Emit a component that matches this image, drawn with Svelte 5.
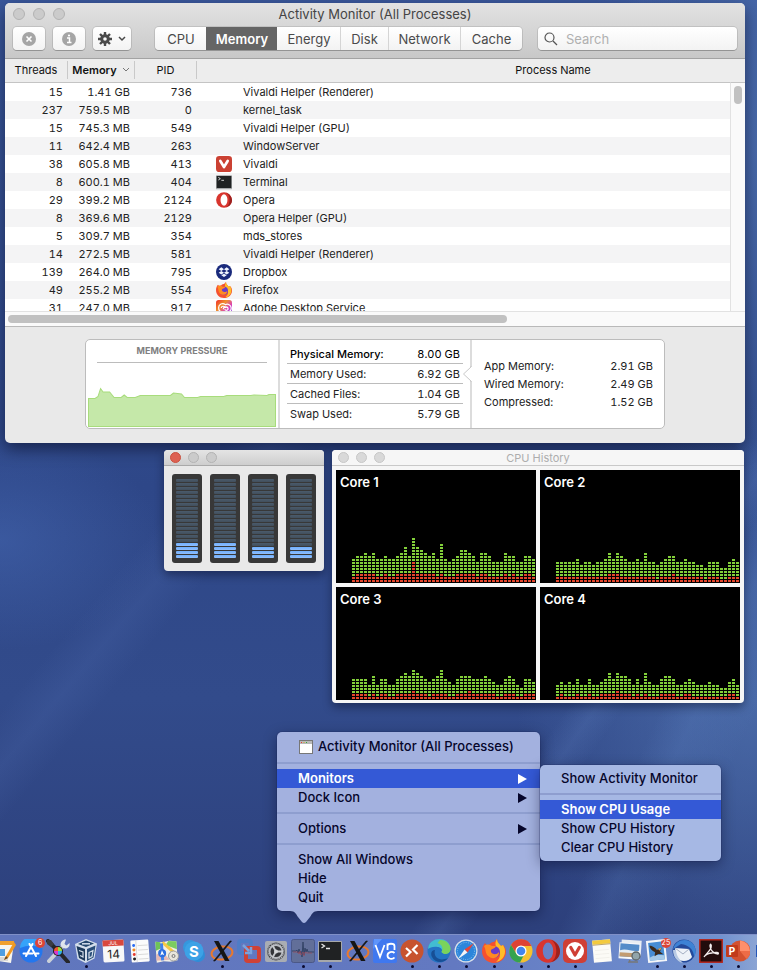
<script lang="ts">
	type Process = { threads: number; memory: string; pid: number; name: string; icon?: string };

	const processes: Process[] = [
		{ threads: 15, memory: '1.41 GB', pid: 736, name: 'Vivaldi Helper (Renderer)' },
		{ threads: 237, memory: '759.5 MB', pid: 0, name: 'kernel_task' },
		{ threads: 15, memory: '745.3 MB', pid: 549, name: 'Vivaldi Helper (GPU)' },
		{ threads: 11, memory: '642.4 MB', pid: 263, name: 'WindowServer' },
		{ threads: 38, memory: '605.8 MB', pid: 413, name: 'Vivaldi', icon: 'vivaldi' },
		{ threads: 8, memory: '600.1 MB', pid: 404, name: 'Terminal', icon: 'terminal' },
		{ threads: 29, memory: '399.2 MB', pid: 2124, name: 'Opera', icon: 'opera' },
		{ threads: 8, memory: '369.6 MB', pid: 2129, name: 'Opera Helper (GPU)' },
		{ threads: 5, memory: '309.7 MB', pid: 354, name: 'mds_stores' },
		{ threads: 14, memory: '272.5 MB', pid: 581, name: 'Vivaldi Helper (Renderer)' },
		{ threads: 139, memory: '264.0 MB', pid: 795, name: 'Dropbox', icon: 'dropbox' },
		{ threads: 49, memory: '255.2 MB', pid: 554, name: 'Firefox', icon: 'firefox' },
		{ threads: 31, memory: '247.0 MB', pid: 917, name: 'Adobe Desktop Service', icon: 'adobe' }
	];

	const tabs = ['CPU', 'Memory', 'Energy', 'Disk', 'Network', 'Cache'];
	let activeTab = $state('Memory');
	let search = $state('');

	const totals = [
		['Physical Memory:', '8.00 GB'],
		['Memory Used:', '6.92 GB'],
		['Cached Files:', '1.04 GB'],
		['Swap Used:', '5.79 GB']
	];
	const breakdown = [
		['App Memory:', '2.91 GB'],
		['Wired Memory:', '2.49 GB'],
		['Compressed:', '1.52 GB']
	];

	// lit segments per core, out of 20
	const usage = [4, 4, 3, 3];
	const segments = Array.from({ length: 20 }, (_, i) => 20 - i);

	// total = user + system, counted in cells
	const cores = [
		{
			name: 'Core 1',
			total: [8,9,9,10,9,10,8,8,9,8,8,9,10,12,9,15,12,11,10,9,10,8,13,8,7,8,9,11,11,10,9,7,10,10,9,7,7,7,10,9,9,7,7,9,9,8],
			system: [2,3,3,3,3,3,2,2,3,2,2,3,3,3,3,7,3,3,3,3,3,2,3,2,2,2,3,3,3,3,3,2,3,3,2,2,2,2,3,2,3,2,2,3,3,2]
		},
		{
			name: 'Core 2',
			total: [7,7,7,7,7,8,6,7,7,6,7,7,8,10,8,10,9,8,7,7,8,7,10,7,7,6,7,8,9,9,7,7,8,7,7,6,6,5,7,7,7,5,5,7,8,7],
			system: [2,2,2,2,2,2,2,2,2,2,2,2,2,3,3,3,2,2,2,2,2,2,2,2,2,1,2,2,2,3,2,2,2,2,2,2,2,1,2,2,2,1,1,2,2,2]
		},
		{
			name: 'Core 3',
			total: [7,7,7,7,5,8,5,7,7,5,5,7,8,9,8,10,9,8,7,6,7,8,10,7,6,5,7,8,8,8,7,7,7,8,7,6,5,5,7,8,7,5,4,7,7,6],
			system: [2,2,2,2,1,2,1,2,2,1,1,2,2,2,2,3,2,2,2,1,2,2,2,2,1,1,2,2,2,3,2,2,2,2,2,2,1,1,2,2,2,1,1,2,2,2]
		},
		{
			name: 'Core 4',
			total: [5,6,5,6,5,7,5,5,7,5,5,6,7,9,7,9,8,8,7,5,7,5,9,6,5,5,7,8,8,7,5,5,6,7,6,5,5,5,6,5,5,4,4,6,7,5],
			system: [1,2,1,1,1,2,1,1,2,1,1,2,2,2,2,3,2,2,2,1,2,1,2,1,1,1,2,2,2,2,1,1,2,2,1,1,1,1,1,1,1,1,1,2,2,1]
		}
	];

	function cells(from: number[] | null, to: number[]) {
		let d = '';
		to.forEach((top, col) => {
			for (let row = from ? from[col] : 0; row < top; row++) {
				d += `M${col * 4} ${45 - (row + 1) * 3}h3v2h-3z`;
			}
		});
		return d;
	}

	const dock = [
		{ icon: 'pages', label: 'Pages' },
		{ icon: 'appstore', label: 'App Store', badge: '6' },
		{ icon: 'tools', label: 'ColorSync Utility' },
		{ icon: 'vbox', label: 'VirtualBox', open: true },
		{ icon: 'calendar', label: 'Calendar' },
		{ icon: 'reminders', label: 'Reminders' },
		{ icon: 'maps', label: 'Maps' },
		{ icon: 'skype', label: 'Skype' },
		{ icon: 'x11', label: 'XQuartz', open: true },
		{ icon: 'vmware', label: 'VMware Fusion' },
		{ icon: 'settings', label: 'System Preferences' },
		{ icon: 'activity', label: 'Activity Monitor', open: true },
		{ icon: 'terminal', label: 'Terminal', open: true },
		{ icon: 'x11', label: 'X11' },
		{ icon: 'vnc', label: 'VNC Viewer' },
		{ icon: 'remote', label: 'Remote Desktop', open: true },
		{ icon: 'edge', label: 'Edge', open: true },
		{ icon: 'safari', label: 'Safari', open: true },
		{ icon: 'firefox', label: 'Firefox', open: true },
		{ icon: 'chrome', label: 'Chrome', open: true },
		{ icon: 'opera', label: 'Opera', open: true },
		{ icon: 'vivaldi', label: 'Vivaldi', open: true },
		{ icon: 'notes', label: 'Notes' },
		{ icon: 'preview', label: 'Preview' },
		{ icon: 'mail', label: 'Mail', badge: '25', open: true },
		{ icon: 'thunderbird', label: 'Thunderbird', open: true },
		{ icon: 'acrobat', label: 'Acrobat', open: true },
		{ icon: 'powerpoint', label: 'PowerPoint', open: true },
		{ icon: 'word', label: 'Word' }
	];

	// all icons share a 24x24 grid
	const icons: Record<string, string> = {
		pages: '<path d="M2 1L22 4L19 24L0 21z" fill="#f7f5ee"/><path d="M3 2L22 2L22 6L3 6z" fill="#f0a02d"/><path d="M3 10h10v7H3z" fill="#4e9ee2"/><path d="M3 19h13M3 21h13" stroke="#b9bcc2"/><path d="M22 3L14 17L12 21L16 19L24 6z" fill="#f09a24"/><path d="M14 17L12 21L16 19z" fill="#6b4a22"/>',
		appstore: '<circle cx="12" cy="12" r="11.500" fill="#2377ee"/><path d="M1 9a11 11 0 0 1 22 0a20 12 0 0 0-22 0" fill="#35a3fa"/><path d="M13.500 5L7 17M10.500 5L17 17M4.500 14.500h9M16 14.500h3.500" stroke="#fff" stroke-width="2" stroke-linecap="round"/>',
		tools: '<path d="M2 2L10 10M14 14L22 23" stroke="#26272b" stroke-width="4" stroke-linecap="round"/><path d="M1 1L5 1L8 5L5 8L1 5z" fill="#3b3c42"/><path d="M3 22L17 7" stroke="#c9d0d8" stroke-width="4" stroke-linecap="round"/><path d="M20 .500l-1.500 4.500 2 1.500 3-2.500c1 4-3 6.500-6 5l-3-3c0-3 2-5.500 5.500-5.500z" fill="#dfe5ec"/><circle cx="12" cy="12" r="5" fill="#1d1d1f"/><path d="M12 12V8a4 4 0 0 1 4 4z" fill="#9ed93c"/><path d="M12 12h4a4 4 0 0 1-4 4z" fill="#2fb0e8"/><path d="M12 12v4a4 4 0 0 1-4-4z" fill="#d53ad0"/><path d="M12 12H8a4 4 0 0 1 4-4z" fill="#f0562f"/>',
		vbox: '<path d="M12 0L23 4.500L20.500 19.500L11.500 24L3.500 20L1 5z" fill="#d3deeb"/><path d="M2.500 7L11 10V22L5 19z" fill="#1c3a5c"/><path d="M13 10L21.500 6.500L19.500 18.500L13 22z" fill="#284d78"/><path d="M4 5L12 1.500L20 4.500L12 8z" fill="#23476e"/><path d="M8 4.800h8" stroke="#d3deeb" stroke-width="1.500"/><path d="M5 11.500l4 1.500v5l-3-1.500M15 13.500l4-2-1 6-3 1.500z" fill="none" stroke="#d3deeb" stroke-width="1.200"/>',
		calendar: '<g transform="rotate(-3 12 12)"><rect x="2" y="1" width="21" height="22" rx="1.500" fill="#f8f8f8"/><path d="M2 1h21v6H2z" fill="#d9483d"/><text x="12.500" y="6" font-size="5" text-anchor="middle" fill="#fff" font-family="Inter, sans-serif">JUL</text><text x="12.500" y="19.500" font-size="12" text-anchor="middle" fill="#222" font-family="Inter, sans-serif">14</text></g>',
		reminders: '<g transform="rotate(-4 12 12)"><rect x="3" y="1" width="18" height="22" rx="1" fill="#fbfbfb"/><path d="M8.500 1v22M10 6.500h10M10 11h10M10 15.500h10M10 20h10" stroke="#d3d3d3" stroke-width=".800"/><circle cx="6" cy="6" r="1.500" fill="#2a6df5"/><circle cx="6" cy="10.500" r="1.500" fill="#f08a24"/><circle cx="6" cy="15" r="1.500" fill="#e23a30"/><circle cx="6" cy="19.500" r="1.500" fill="#222"/></g>',
		maps: '<g transform="rotate(-4 12 12)"><path d="M1 2l7 1 7-1 7 1v19l-7 1-7-1-7 1z" fill="#f2efe4"/><path d="M1 2l5 .800V9L1 11z" fill="#6fc457"/><path d="M14 2l8 1v8L11 6z" fill="#7ccc60"/><path d="M8 3l14 14" stroke="#f6c944" stroke-width="3"/><path d="M1 15l6-3 7 9H1z" fill="#e6b9b4"/><path d="M7 4v17" stroke="#3f82ea" stroke-width="3"/><circle cx="7" cy="14" r="4" fill="#2d6fe0"/><path d="M7 11l2 5-2-1-2 1z" fill="#fff"/></g><circle cx="18.500" cy="17" r="5" fill="#e9e6dc" stroke="#9b9d9e"/><circle cx="18.500" cy="17" r="1.500" fill="none" stroke="#777"/>',
		skype: '<circle cx="8" cy="8" r="7" fill="#3597dd"/><circle cx="16" cy="16" r="7" fill="#2f8ed8"/><circle cx="12" cy="12" r="9.500" fill="#3ca2e6"/><text x="12" y="17.500" font-size="15" font-weight="700" text-anchor="middle" fill="#fff" font-family="Inter, sans-serif">S</text>',
		x11: '<ellipse cx="12" cy="14" rx="10.500" ry="6.500" fill="none" stroke="#e8792e" stroke-width="2" transform="rotate(-8 12 14)"/><path d="M4 2h4.500l11 20H15z" fill="#151515"/><path d="M20 2h1.500L5 22H3.500z" fill="#151515" stroke="#151515" stroke-width=".600"/>',
		vmware: '<rect x="2" y="2" width="12" height="12" rx="2" fill="none" stroke="#4e7cc6" stroke-width="4"/><rect x="9" y="9" width="13" height="13" rx="2" fill="none" stroke="#cf4236" stroke-width="4"/><path d="M6 6l6 6M14 8v6H8" stroke="#7ba2dc" stroke-width="2.500" fill="none"/>',
		settings: '<rect x="1" y="2" width="22" height="21" rx="2" fill="#a9adb3"/><circle cx="12" cy="12.500" r="9" fill="#333539"/><circle cx="12" cy="12.500" r="6.500" fill="none" stroke="#b8bbc0" stroke-width="2"/><circle cx="12" cy="12.500" r="8" fill="none" stroke="#b8bbc0" stroke-width="1.500" stroke-dasharray="1 1"/><path d="M12 12.500h7M12 12.500l-3.500-6M12 12.500l-3.500 6" stroke="#c5c8cc" stroke-width="1.800"/><circle cx="12" cy="12.500" r="2" fill="#d4d6d9"/>',
		activity: '<rect x=".500" y=".500" width="23" height="23" rx="2" fill="#626f99" stroke="#4b5887"/><path d="M1 12h4l1-1 1 3 1-4 1 4 1-2 1 6 1-15 1 13 1-7 1 4 1-3 1 3h6" fill="none" stroke="#344467"/><path d="M2 13h5l1 2 1-3 1 4 2-3 1 4 1-4 2 1h5" fill="none" stroke="#9c4b5b" stroke-width=".700"/>',
		terminal: '<rect x="0" y="2" width="24" height="21" rx="1" fill="#a6a8aa"/><rect x="1" y="3" width="22" height="18" fill="#202223"/><path d="M3.500 5l3 2-3 2M8 9.500h4" fill="none" stroke="#e8e8e8" stroke-width="1.300"/>',
		vnc: '<rect width="24" height="24" rx="2" fill="#3f78ef"/><path d="M1 0h8L0 10z" fill="#5f95fa"/><path d="M2.500 6l4.500 12L11.500 6M14.500 11V4.500M14.500 7c0-3 7-3 7 0v4M21.500 14c-2-2-7-1-7 2.500s5 4.500 7 2" fill="none" stroke="#fff" stroke-width="1.800"/>',
		remote: '<circle cx="12" cy="12" r="11.500" fill="#c7532f"/><path d="M6 9l4.500 4L6 17.500M17.500 6L13 10.500l4.500 4.500" fill="none" stroke="#fff" stroke-width="2.200"/>',
		edge: '<circle cx="12" cy="12" r="11.500" fill="#2474c4"/><path d="M1 10C2-3 22-3 23.500 9c.500 6-7 7-9 4c2-2-1-5-4-5c-4-1-8 1-9.500 2z" fill="#42bdd2"/><path d="M13 1c7 0 11 5 10.500 10c-1 5-7 5-9 2l1-3c0-3-2-5-5-6z" fill="#7ad35c"/><path d="M8 11c-2 7 4 12 13 8c-4 6-13 5-16-1c-2-4 0-7 3-7z" fill="#174f96"/>',
		safari: '<circle cx="12" cy="12" r="11.500" fill="#d9e1ea"/><circle cx="12" cy="12" r="10.300" fill="#2c86db"/><circle cx="12" cy="12" r="8.500" fill="none" stroke="#b6dcf7" stroke-dasharray=".600 1.600"/><path d="M20 4L10.500 10.500L13.500 13.500z" fill="#ea4335"/><path d="M4 20L10.500 10.500L13.500 13.500z" fill="#f3f5f7"/>',
		firefox: '<path d="M12 24C5 24 0 19 0 12C0 9 1 6 3 4L5 6.500L8 5C9 3 12 3 12 3C13 2 14 1 15 0C15 4 18 5 19 7L21 6C23 8 24 10 24 13C24 19 19 24 12 24z" fill="#f5502f"/><path d="M15 0c0 4 3 5 4 7l2-1c5 8 0 16-7 17c5-4 5-9 2-12c-2-3-4-6-1-11z" fill="#ffbd28"/><circle cx="12" cy="13" r="6" fill="#6a3bc7"/><path d="M2 7c4-3 6-1 8 0h4c-1 3-5 3-5 4c-1 4 5 6 8 2c0 7-8 8-12 3c-2-3-1-6-3-9z" fill="#ff8a20"/>',
		chrome: '<circle cx="12" cy="12" r="11.500" fill="#f5c12f"/><path d="M2 6a11.500 11.500 0 0 1 20.500 1H12a5 5 0 0 0-5 7z" fill="#de4334"/><path d="M2 6l5.500 9c2 3 6 2 8 0L11 23.500C1 23-2 13 2 6z" fill="#34a34f"/><circle cx="12" cy="12" r="5.500" fill="#fff"/><circle cx="12" cy="12" r="4.300" fill="#4285ee"/>',
		opera: '<circle cx="12" cy="12" r="11.800" fill="#d8352e"/><path d="M15 1c12 4 12 19 0 22c7-3 7-19 0-22z" fill="#9d211f"/><ellipse cx="12" cy="12" rx="5.200" ry="8.500" fill="#fff"/>',
		operaDock: '<path fill-rule="evenodd" d="M12 .200a11.800 11.800 0 1 0 0 23.600a11.800 11.800 0 1 0 0-23.600zM12 3.500a5.200 8.500 0 1 1 0 17a5.200 8.500 0 1 1 0-17z" fill="#d8352e"/><path d="M15 1c12 4 12 19 0 22c7-3 7-19 0-22z" fill="#9d211f"/>',
		vivaldi: '<rect width="24" height="24" rx="5" fill="#cf3f35"/><circle cx="12" cy="12" r="9" fill="#fff"/><path d="M7.800 8.500l4.200 7.500L16.300 8.500" fill="none" stroke="#cf3f35" stroke-width="3.200" stroke-linecap="round" stroke-linejoin="round"/>',
		vivaldiRow: '<rect width="24" height="24" rx="5" fill="#cb4133"/><path d="M6.500 7.500l5.500 9 5.500-9" fill="none" stroke="#fff" stroke-width="4" stroke-linecap="round" stroke-linejoin="round"/>',
		notes: '<g transform="rotate(-5 12 12)"><rect x="3" y="1" width="18" height="22" fill="#fcfbf6"/><path d="M3 1h18v4H3z" fill="#f3ca3e"/><path d="M3 5.500h18" stroke="#a8863a" stroke-width=".700"/><path d="M5 11h14M5 15h14M5 19h14" stroke="#eceae4" stroke-width=".600"/></g>',
		preview: '<g transform="rotate(4 12 12)"><rect x="3" y="1" width="20" height="15" fill="#e8edf2"/><rect x="1" y="4" width="21" height="16" fill="#f7f8fa"/><rect x="2" y="5" width="19" height="13" fill="#548cc9"/><path d="M2 12c6-3 12 1 19-1v4H2z" fill="#e4edf4"/><path d="M2 14h19v4H2z" fill="#c29c72"/></g><circle cx="18" cy="17" r="4" fill="#92a5aa" stroke="#5d6669" stroke-width="1.300"/><path d="M12 21l-1 2h9" stroke="#777" stroke-width="1.500" fill="none"/>',
		mail: '<g transform="rotate(-6 12 12)"><rect x="2" y="1" width="19" height="22" fill="#f4f6f8"/><rect x="4" y="3" width="15" height="18" fill="#478dd4"/><path d="M4 18c5-3 9-2 15-1v4H4z" fill="#a5c9e8"/><path d="M5 6c3 0 6 3 7 5l5-2-2 4 3 3-5-1-4 2 1-4c-3-2-5-4-5-7z" fill="#3c2a1c"/><path d="M13 10l4-1-2 3z" fill="#d3a05b"/></g>',
		thunderbird: '<circle cx="12" cy="12" r="11.500" fill="#254a9b"/><path d="M1 10C4 0 16-2 22 6c2 4 2 9 0 12c0-7-5-12-13-13z" fill="#3d82d5"/><path d="M3 9l14 1 3 8c-3 5-12 5-16 1z" fill="#eef2f8"/><path d="M3 9l8 6 6-5" fill="none" stroke="#a4afc3"/><path d="M1 11c0 7 4 12 10 13c-4-4-7-8-7-13z" fill="#b7c9e4"/>',
		acrobat: '<rect x=".800" y=".800" width="22.400" height="22.400" fill="#220c0c" stroke="#b3271e" stroke-width="1.500"/><path d="M5 18c2-3 5-5 7-9c1-4-1-5-1-2c0 4 4 8 8 8c2-2-3-2-6-1c-3 0-7 2-8 4z" fill="none" stroke="#f4eeee" stroke-width="1.300"/>',
		powerpoint: '<circle cx="14" cy="12" r="10.500" fill="#d35230"/><path d="M14 1.500a10.500 10.500 0 0 1 10 10.500H14z" fill="#ff8f6b"/><path d="M14 12h10.500a10.500 10.500 0 0 1-4 8z" fill="#ed6c47"/><rect x="0" y="6" width="12" height="12" rx="1" fill="#c13b1b"/><text x="6" y="15.500" font-size="10" font-weight="700" text-anchor="middle" fill="#fff" font-family="Inter, sans-serif">P</text>',
		word: '<rect x="5" y="1" width="19" height="22" rx="1" fill="#d9e6f8"/><rect x="2" y="6" width="12" height="12" fill="#2456b8"/>',
		dropbox: '<circle cx="12" cy="12" r="12" fill="#1a2a7c"/><path d="M8 5l4 2.700-4 2.700-4-2.700zM16 5l4 2.700-4 2.700-4-2.700zM8 10.500l4 2.700-4 2.700-4-2.700zM16 10.500l4 2.700-4 2.700-4-2.700zM12 14.500l4 2.500-4 2.500-4-2.500z" fill="#f0f5ff"/>',
		adobe: '<defs><linearGradient id="cc" x1="0" y1="0" x2="1" y2="1"><stop offset="0" stop-color="#f02a2a"/><stop offset=".350" stop-color="#f0912c"/><stop offset=".650" stop-color="#d83bc0"/><stop offset="1" stop-color="#5a4af0"/></linearGradient></defs><rect width="24" height="24" rx="4" fill="url(#cc)"/><path d="M4 12a6 6 0 0 1 10-5a6 6 0 1 1 1 11H9a6 6 0 0 1-5-6zM8 12c0-4 5-3 7 0M11 14c0-5 8-5 7 0c-1 2-4 2-5 0" fill="none" stroke="#fff" stroke-width="1.800"/>'
	};
</script>

{#snippet icon(name: string)}
	<svg class="icon" viewBox="0 0 24 24" aria-hidden="true">{@html icons[name]}</svg>
{/snippet}

{#snippet lights(closable: boolean)}
	<div class="lights">
		<button class="light" class:close={closable} aria-label="Close"></button>
		<button class="light" aria-label="Minimize"></button>
		<button class="light" aria-label="Zoom"></button>
	</div>
{/snippet}

{#snippet arrow()}
	<svg class="arrow" viewBox="0 0 9 10" aria-hidden="true"><path d="M0 0L9 5L0 10z" fill="currentColor" /></svg>
{/snippet}

<main class="desktop">
	<section class="window monitor">
		<header class="titlebar">
			{@render lights(false)}
			<h1>Activity Monitor (All Processes)</h1>
			<div class="toolbar">
				<button class="tool" aria-label="Stop process">
					<svg width="14" height="14" viewBox="0 0 14 14"><circle cx="7" cy="7" r="7" fill="#a5a5a5" /><path d="M4.500 4.500l5 5M9.500 4.500l-5 5" stroke="#fff" stroke-width="1.600" /></svg>
				</button>
				<button class="tool" aria-label="Inspect process">
					<svg width="14" height="14" viewBox="0 0 14 14"><circle cx="7" cy="7" r="7" fill="#a5a5a5" /><path d="M5 6h2.500v4.500M5 10.500h4.500" fill="none" stroke="#fff" stroke-width="1.500" /><circle cx="7" cy="3.500" r="1.100" fill="#fff" /></svg>
				</button>
				<button class="tool wide" aria-label="Options">
					<svg width="14" height="14" viewBox="0 0 14 14"><g stroke="#4a4a4a" stroke-width="2.400"><path d="M7 0v14M0 7h14M2 2l10 10M12 2L2 12" /></g><circle cx="7" cy="7" r="4.800" fill="#4a4a4a" /><circle cx="7" cy="7" r="1.800" fill="#fafafa" /></svg>
					<svg width="8" height="6" viewBox="0 0 8 6"><path d="M1 1l3 3 3-3" fill="none" stroke="#4a4a4a" stroke-width="1.500" /></svg>
				</button>
				<div class="tabs" role="tablist">
					{#each tabs as tab}
						<button role="tab" aria-selected={tab === activeTab} class:active={tab === activeTab} onclick={() => (activeTab = tab)}>{tab}</button>
					{/each}
				</div>
				<label class="search">
					<svg width="14" height="14" viewBox="0 0 14 14"><circle cx="5.500" cy="5.500" r="4.500" fill="none" stroke="#555" stroke-width="1.200" /><path d="M9 9l4 4" stroke="#555" stroke-width="1.300" /></svg>
					<input type="text" placeholder="Search" aria-label="Search" bind:value={search} />
				</label>
			</div>
		</header>

		<div class="list">
			<div class="viewport">
				<table>
					<colgroup><col class="c-threads" /><col class="c-memory" /><col class="c-pid" /><col /></colgroup>
					<thead>
						<tr>
							<th><span>Threads</span></th>
							<th class="sorted"><span>Memory <svg width="8" height="6" viewBox="0 0 8 6"><path d="M1 1l3 3 3-3" fill="none" stroke="#777" /></svg></span></th>
							<th><span>PID</span></th>
							<th>Process Name</th>
						</tr>
					</thead>
					<tbody>
						{#each processes as p}
							<tr>
								<td>{p.threads}</td>
								<td>{p.memory}</td>
								<td>{p.pid}</td>
								<td class="name">
									<div>
										<span class="row-icon">
											{#if p.icon}{@render icon(p.icon === 'vivaldi' ? 'vivaldiRow' : p.icon)}{/if}
										</span>
										{p.name}
									</div>
								</td>
							</tr>
						{/each}
					</tbody>
				</table>
			</div>
			<div class="vscroll"><div class="track"><div class="thumb"></div></div></div>
		</div>
		<div class="hscroll"><div class="thumb"></div></div>

		<footer>
			<div class="summary">
				<div class="pressure">
					<h2>MEMORY PRESSURE</h2>
					<svg viewBox="0 0 187 40" preserveAspectRatio="none" aria-hidden="true">
						<path d="M.500 11.500H7L10 9.500L12.500 1.500L15 5H21.500L26 10.500H33L36 8L39 10.500H47L52 8.500H82L85 6L93 7L96 10.500H109L112 9.500H135L138 8.500H162L165 8L178 8.500L180 7.500H186.500V39.500H.500z" fill="#c5e8a9" stroke="#a8dc7c" />
					</svg>
				</div>
				<dl class="totals">
					{#each totals as [label, value]}
						<div><dt>{label}</dt><dd>{value}</dd></div>
					{/each}
				</dl>
				<dl class="breakdown">
					<svg class="callout" viewBox="0 0 10 16" aria-hidden="true"><path d="M10 1L8 1L1 8L8 15H10z" fill="#fff" /><path d="M9 0V1L1.500 8L9 15V16" fill="none" stroke="#c9c9c9" /></svg>
					{#each breakdown as [label, value]}
						<div><dt>{label}</dt><dd>{value}</dd></div>
					{/each}
				</dl>
			</div>
		</footer>
	</section>

	<section class="window small usage" aria-label="CPU Usage">
		<header>{@render lights(true)}</header>
		<div class="meters">
			{#each usage as level}
				<div class="meter">
					{#each segments as s}<i class:lit={s <= level}></i>{/each}
				</div>
			{/each}
		</div>
	</section>

	<section class="window small history">
		<header>{@render lights(false)}<h2>CPU History</h2></header>
		<div class="graphs">
			{#each cores as core}
				<div class="graph">
					<h3>{core.name}</h3>
					<svg width="184" height="45" viewBox="0 0 184 45" aria-hidden="true">
						<path d={cells(core.system, core.total)} fill="#82cf3a" />
						<path d={cells(null, core.system)} fill="#e2452c" />
					</svg>
				</div>
			{/each}
		</div>
	</section>

	<div class="menu dock-menu" role="menu">
		<button role="menuitem" class="title">
			<svg width="14" height="14" viewBox="0 0 14 14" aria-hidden="true"><rect x=".500" y=".500" width="13" height="13" fill="#fff" stroke="#777" /><path d="M1 1h12v3H1z" fill="#b9b9b9" /><path d="M2 2h1v1H2z" fill="#e33" /><path d="M4.500 2h1v1h-1z" fill="#d9a520" /><path d="M7 2h1v1H7z" fill="#3a3" /></svg>
			Activity Monitor (All Processes)
		</button>
		<hr />
		<button role="menuitem" class="selected">Monitors {@render arrow()}</button>
		<button role="menuitem">Dock Icon {@render arrow()}</button>
		<hr />
		<button role="menuitem">Options {@render arrow()}</button>
		<hr />
		<button role="menuitem">Show All Windows</button>
		<button role="menuitem">Hide</button>
		<button role="menuitem">Quit</button>
		<svg class="pointer" viewBox="0 0 28 13" aria-hidden="true"><path d="M0 0C5 0 6 3 8 6L12 11Q14 13 16 11L20 6C22 3 23 0 28 0z" fill="#a3b1df" /></svg>
	</div>

	<div class="menu submenu" role="menu">
		<button role="menuitem">Show Activity Monitor</button>
		<hr />
		<button role="menuitem" class="selected">Show CPU Usage</button>
		<button role="menuitem">Show CPU History</button>
		<button role="menuitem">Clear CPU History</button>
	</div>

	<nav class="dock" aria-label="Dock">
		<div class="dock-items">
			{#each dock as app}
				<button class="app" class:open={app.open} aria-label={app.label}>
					{@render icon(app.icon === 'opera' ? 'operaDock' : app.icon)}
					{#if app.badge}<span class="badge">{app.badge}</span>{/if}
				</button>
			{/each}
		</div>
	</nav>
</main>

<style>
	:global(body) {
		margin: 0;
	}

	.desktop {
		position: relative;
		height: 100vh;
		min-height: 970px;
		overflow: hidden;
		font-family: Inter, "Liberation Sans", sans-serif;
		font-size: 11px;
		color: #222;
		background:
			linear-gradient(125deg, transparent 74%, rgba(110, 145, 210, .16) 76%, transparent 78%),
			linear-gradient(115deg, transparent 82%, rgba(100, 140, 205, .18) 85%, transparent 90%),
			linear-gradient(130deg, transparent 38%, rgba(90, 120, 190, .16) 41%, transparent 44%),
			radial-gradient(ellipse 160px 110px at 0 540px, rgba(70, 105, 180, .5), transparent),
			radial-gradient(ellipse 240px 300px at 100% 700px, rgba(92, 130, 190, .55), transparent),
			radial-gradient(ellipse 140px 400px at 100% 150px, rgba(90, 128, 190, .5), transparent),
			linear-gradient(#3a589c, #2e4788 50%, #324b8b 72%, #2d407c 96%);
	}

	button {
		margin: 0;
		padding: 0;
		border: 0;
		background: none;
		font: inherit;
		color: inherit;
	}

	h1, h2, h3, dl, dd {
		margin: 0;
		font-weight: 400;
	}

	.icon {
		display: block;
		width: 100%;
		height: 100%;
	}

	/* windows */
	.window {
		position: absolute;
		display: flex;
		flex-direction: column;
		border-radius: 5px;
		overflow: hidden;
		background: #e9e9e9;
		box-shadow: 0 6px 16px rgba(0, 0, 20, .5);
	}

	.lights {
		display: flex;
		gap: 8px;
	}

	.light {
		width: 12px;
		height: 12px;
		box-sizing: border-box;
		border: 1px solid #b2b2b2;
		border-radius: 50%;
		background: #cbcbcb;
	}

	.light.close {
		background: #dd6152;
		border-color: #c9503f;
	}

	.monitor {
		top: 3px;
		left: 5px;
		right: 12px;
		height: 440px;
	}

	.titlebar {
		position: relative;
		box-sizing: border-box;
		height: 56px;
		padding: 5px 8px 0;
		background: linear-gradient(#e2e2e2, #c8c8c8);
		border-bottom: 1px solid #a3a3a3;
	}

	.titlebar h1 {
		position: absolute;
		top: 3px;
		left: 0;
		right: 0;
		text-align: center;
		font-size: 13px;
		line-height: 17px;
		color: #444;
		pointer-events: none;
	}

	.toolbar {
		display: flex;
		gap: 8px;
		margin-top: 7px;
	}

	.tool, .tabs, .search {
		box-sizing: border-box;
		height: 23px;
		border-radius: 4px;
		background: linear-gradient(#fff, #f3f3f3);
		box-shadow: 0 0 0 1px rgba(0, 0, 0, .1), 0 1px 0 #a5a5a5;
	}

	.tool {
		flex-shrink: 0;
		display: flex;
		align-items: center;
		justify-content: center;
		gap: 6px;
		width: 32px;
	}

	.tool.wide {
		width: 38px;
	}

	.tabs {
		flex-shrink: 0;
		display: grid;
		grid-template-columns: 51px 71px 63px 48px 72px 62px;
		margin-left: 16px;
		overflow: hidden;
	}

	.tabs button {
		border-left: 1px solid #d5d5d5;
		font-size: 13px;
		color: #4a4a4a;
	}

	.tabs button:first-child, .tabs .active, .tabs .active + button {
		border-left-color: transparent;
	}

	.tabs .active {
		background: #656565;
		color: #fff;
		font-weight: 600;
	}

	.search {
		flex: 1;
		min-width: 0;
		display: flex;
		align-items: center;
		gap: 8px;
		margin-left: 8px;
		padding: 0 6px;
	}

	.search input {
		flex: 1;
		min-width: 0;
		padding: 0;
		border: 0;
		outline: 0;
		background: none;
		font: 13px Inter, sans-serif;
	}

	.search input::placeholder {
		color: #b0b0b0;
	}

	/* process list */
	.list {
		flex: 1;
		min-height: 0;
		display: flex;
		background: #fff;
	}

	.viewport {
		flex: 1;
		overflow: hidden;
	}

	table {
		width: 904px;
		table-layout: fixed;
		border-collapse: collapse;
		font-variant-numeric: tabular-nums;
	}

	.c-threads { width: 63px; }
	.c-memory { width: 67px; }
	.c-pid { width: 62px; }

	th {
		box-sizing: border-box;
		height: 24px;
		padding: 0 0 2px;
		background: #ededed;
		box-shadow: inset 0 -1px #c4c4c4;
		font-weight: 400;
		color: #111;
	}

	th span {
		display: flex;
		align-items: center;
		justify-content: center;
		gap: 5px;
		height: 18px;
		border-right: 1px solid #c9c9c9;
	}

	th.sorted {
		font-weight: 600;
	}

	td {
		height: 18px;
		padding: 0 5px 0 0;
		text-align: right;
		white-space: nowrap;
	}

	tbody tr:nth-child(even) {
		background: #f4f4f5;
	}

	.name div {
		display: flex;
		align-items: center;
		gap: 11px;
		padding-left: 19px;
	}

	.row-icon {
		width: 16px;
		height: 16px;
	}

	.vscroll {
		width: 15px;
		box-sizing: border-box;
		padding-top: 23px;
		background: #ededed;
	}

	.track {
		box-sizing: border-box;
		height: 100%;
		padding: 3px;
		border-top: 1px solid #c4c4c4;
		border-left: 1px solid #e2e2e2;
		background: #fafafa;
	}

	.track .thumb {
		width: 8px;
		height: 18px;
	}

	.thumb {
		border-radius: 4px;
		background: #c1c1c1;
	}

	.hscroll {
		box-sizing: border-box;
		height: 16px;
		padding: 3px;
		border-top: 1px solid #e2e2e2;
		border-bottom: 1px solid #b9b9b9;
		background: #fafafa;
	}

	.hscroll .thumb {
		width: 68%;
		height: 8px;
	}

	/* memory summary */
	footer {
		display: flex;
		justify-content: center;
		padding: 12px 8px 14px;
	}

	.summary {
		display: grid;
		grid-template-columns: 192px 192px 1fr;
		box-sizing: border-box;
		width: 580px;
		height: 90px;
		border: 1px solid #bcbcbc;
		border-radius: 5px;
		background: #fff;
		font-variant-numeric: tabular-nums;
	}

	.pressure {
		display: flex;
		flex-direction: column;
		justify-content: space-between;
		padding: 4px 2px 1px;
	}

	.pressure h2 {
		margin: 0 9px;
		padding-bottom: 5px;
		border-bottom: 1px solid #bcbcbc;
		font-size: 9px;
		font-weight: 700;
		line-height: 13px;
		text-align: center;
		color: #808080;
	}

	.pressure svg {
		width: 100%;
		height: 40px;
	}

	.totals, .breakdown {
		border-left: 2px solid #dcdcdc;
	}

	.totals {
		padding: 4px 7px;
	}

	dl > div {
		display: flex;
		justify-content: space-between;
		align-items: center;
	}

	.totals > div {
		box-sizing: border-box;
		height: 20px;
		padding: 0 3px;
		border-bottom: 1px solid #bcbcbc;
	}

	.totals > div:first-child {
		color: #000;
		font-weight: 500;
	}

	.totals > div:last-of-type {
		border-bottom-color: transparent;
	}

	.breakdown {
		position: relative;
		display: flex;
		flex-direction: column;
		justify-content: center;
		padding: 0 11px 0 12px;
	}

	.breakdown > div {
		height: 18px;
	}

	.callout {
		position: absolute;
		top: 26px;
		left: -10px;
		width: 10px;
		height: 16px;
	}

	/* floating CPU windows */
	.small {
		top: 450px;
		border-radius: 4px;
		box-shadow: 0 4px 10px rgba(0, 0, 20, .4);
	}

	.small header {
		position: relative;
		display: flex;
		align-items: center;
		box-sizing: border-box;
		height: 16px;
		padding-left: 6px;
		border-bottom: 1px solid #a9a9a9;
		background: linear-gradient(#e4e4e4, #cecece);
	}

	.small .lights {
		gap: 7px;
	}

	.small .light {
		width: 11px;
		height: 11px;
	}

	.usage {
		left: 164px;
		width: 160px;
	}

	.meters {
		display: flex;
		gap: 8px;
		padding: 8px;
	}

	.meter {
		flex: 1;
		display: flex;
		flex-direction: column;
		gap: 1px;
		padding: 5px 4px;
		border-radius: 3px;
		background: #383838;
	}

	.meter i {
		height: 3px;
		border-radius: 1px;
		background: linear-gradient(#4a5b6c, #424f5c);
	}

	.meter .lit {
		background: linear-gradient(#6fb0ff, #8fbdfb);
	}

	.history {
		left: 332px;
		right: 13px;
		background: #f6f6f6;
	}

	.history header {
		background: #f6f6f6;
		border-bottom-color: #c9c9c9;
	}

	.history .light {
		background: #d9d9d9;
		border-color: #c6c6c6;
	}

	.history h2 {
		position: absolute;
		left: 0;
		right: 0;
		text-align: center;
		font-size: 11px;
		line-height: 16px;
		color: #adadad;
		pointer-events: none;
	}

	.graphs {
		display: grid;
		grid-template-columns: 1fr 1fr;
		gap: 4px;
		padding: 4px 4px 3px;
	}

	.graph {
		display: flex;
		flex-direction: column;
		justify-content: space-between;
		align-items: flex-end;
		height: 113px;
		background: #000;
	}

	.graph h3 {
		align-self: flex-start;
		padding: 4px;
		font-size: 13px;
		font-weight: 600;
		line-height: 17px;
		color: #fff;
	}

	/* menus */
	.menu {
		position: absolute;
		display: flex;
		flex-direction: column;
		padding: 4px 0;
		border-radius: 5px;
		background: #a3b1df;
		box-shadow: 0 4px 14px rgba(0, 0, 30, .4), 0 0 0 1px rgba(30, 45, 100, .25);
		font-size: 13px;
		font-weight: 500;
		line-height: 19px;
		color: #06062b;
	}

	.menu button {
		display: flex;
		align-items: center;
		justify-content: space-between;
		height: 19px;
		padding: 0 13px 0 21px;
		white-space: nowrap;
	}

	.menu .title {
		justify-content: flex-start;
		gap: 5px;
		height: 21px;
		padding-left: 22px;
	}

	.menu .selected {
		background: #3459d6;
		color: #fff;
		font-weight: 600;
	}

	.menu hr {
		width: 100%;
		height: 2px;
		margin: 5px 0;
		border: 0;
		background: #8e9ecf;
	}

	.arrow {
		width: 9px;
		height: 10px;
	}

	.dock-menu {
		top: 732px;
		left: 277px;
		width: 263px;
	}

	.submenu {
		top: 765px;
		left: 540px;
		width: 181px;
		background: #a6b8e4;
	}

	.pointer {
		position: absolute;
		top: 100%;
		left: 13px;
		width: 28px;
		height: 13px;
	}

	/* dock */
	.dock {
		position: absolute;
		left: 0;
		right: 0;
		bottom: 0;
		height: 36px;
		box-sizing: border-box;
		overflow: hidden;
		border-top: 1px solid #7f90c8;
		background: linear-gradient(90deg, #6076bd, #6379c1 60%, #7091cf 95%, #8ba4d4);
	}

	.dock-items {
		display: flex;
		justify-content: space-between;
		margin: 4px -22px 0 -9px;
	}

	.app {
		position: relative;
		width: 26px;
		height: 31px;
		padding: 0 1px 7px;
	}

	.app.open::after {
		content: '';
		position: absolute;
		bottom: 2px;
		left: 12px;
		width: 3px;
		height: 3px;
		border-radius: 50%;
		background: #0a0a30;
	}

	.badge {
		position: absolute;
		top: -1px;
		right: -1px;
		min-width: 10px;
		height: 10px;
		border-radius: 5px;
		background: #dc4437;
		font-size: 7px;
		line-height: 10px;
		text-align: center;
		color: #fff;
	}
</style>
